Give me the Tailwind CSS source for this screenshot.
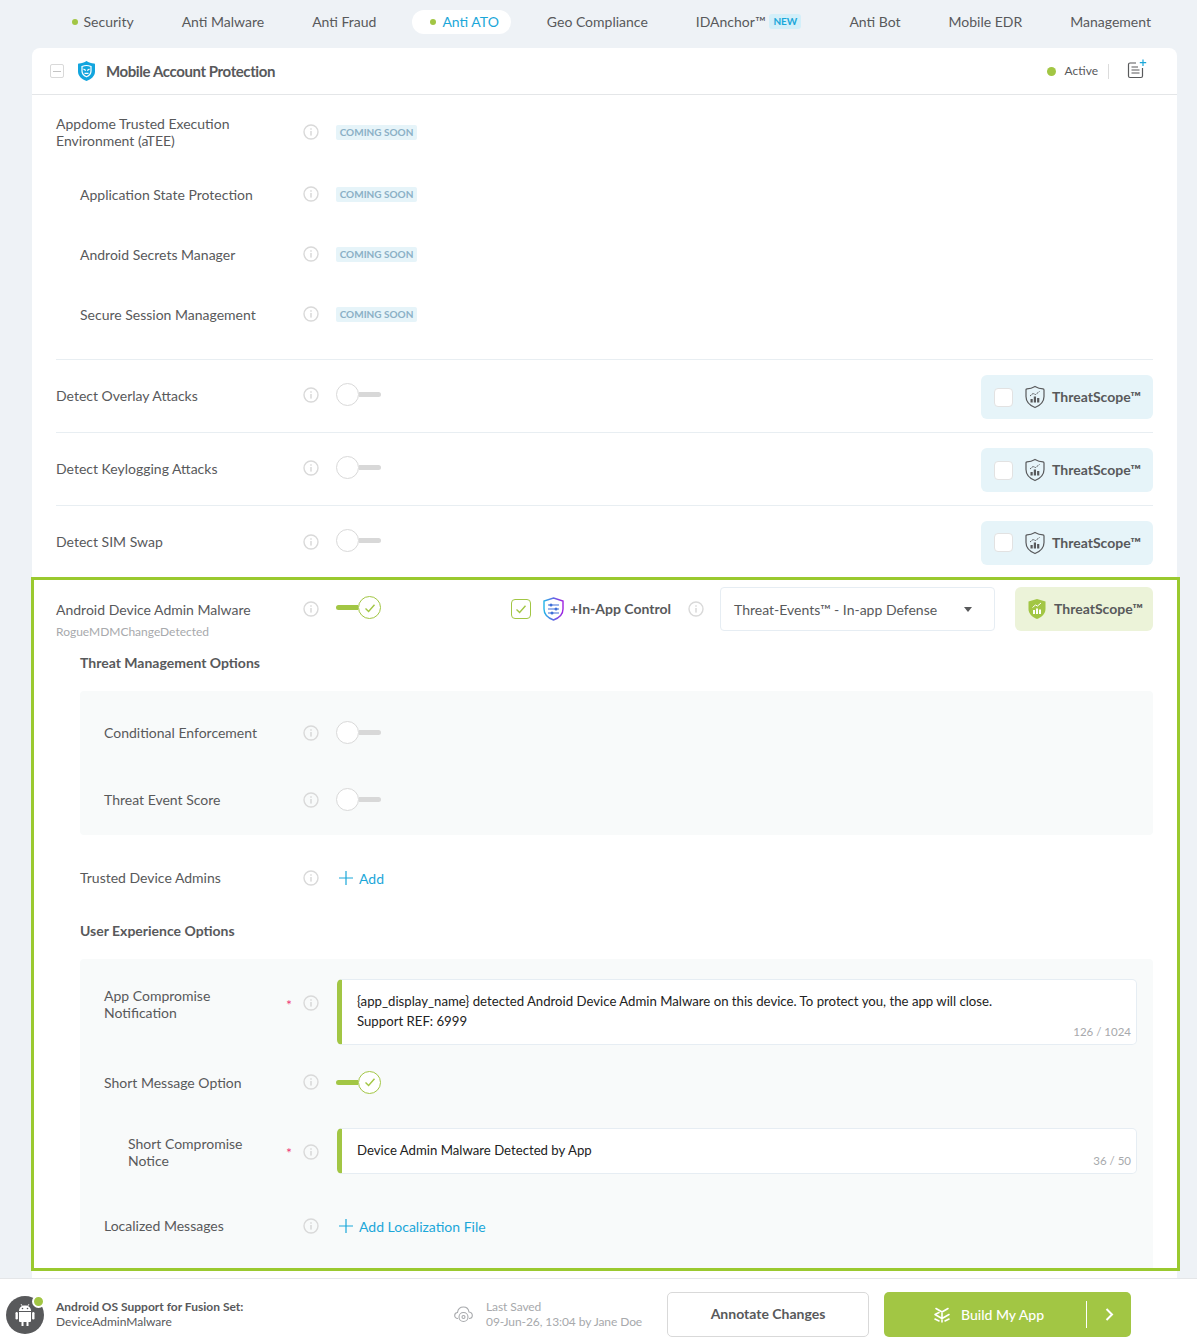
<!DOCTYPE html>
<html lang="en">
<head>
  <meta charset="UTF-8">
  <title>Mobile Account Protection</title>
  <script src="https://cdn.jsdelivr.net/npm/@tailwindcss/browser@4"></script>
</head>
<body class="bg-[#eef2f6] text-[#58595b] text-[14px] font-[family-name:Lato,sans-serif] h-[1344px] overflow-hidden">

  <!-- shared icons -->
  <svg class="hidden">
    <symbol id="info" viewBox="0 0 16 16">
      <circle cx="8" cy="8" r="7" fill="none" stroke="#d9d9d9" stroke-width="1.4"/>
      <rect x="7.4" y="7" width="1.2" height="4.6" fill="#d0d0d0"/>
      <circle cx="8" cy="5" r="0.8" fill="#d0d0d0"/>
    </symbol>
    <symbol id="check" viewBox="0 0 12 12">
      <path d="M1.5 6.5 L4.6 9.5 L10.5 2.8" fill="none" stroke="#a2c644" stroke-width="1.4"/>
    </symbol>
    <symbol id="ts" viewBox="0 0 20 24">
      <path d="M10 1.500 C12.500 3 15.500 3.800 18 3.800 C18.800 3.800 19 4.300 19 5 V11.500 C19 16.500 15 20.500 10 22.500 C5 20.500 1 16.500 1 11.500 V5 C1 4.300 1.200 3.800 2 3.800 C4.500 3.800 7.500 3 10 1.500 Z" fill="none" stroke="#58595b" stroke-width="1.200"/>
      <rect x="5.500" y="14" width="2.200" height="3.500" fill="#58595b"/>
      <rect x="8.800" y="11.500" width="2.200" height="6" fill="#58595b"/>
      <rect x="12.100" y="13" width="2.200" height="4.500" fill="#58595b"/>
      <path d="M5 11 L8 8.500 L10.500 9.500 L14.500 6.500" fill="none" stroke="#58595b" stroke-width="1" stroke-dasharray="2 0.700"/>
    </symbol>
    <symbol id="plus" viewBox="0 0 14 14">
      <path d="M7 0 V14 M0 7 H14" stroke="#1ba7d9" stroke-width="1.2"/>
    </symbol>
  </svg>

  <!-- Tabs -->
  <div class="h-[44px] pb-[1px] flex items-center pl-[53.5px] gap-6">
    <div class="flex items-center gap-[6px] pl-[18px] pr-3 h-6"><span class="size-[6px] rounded-full bg-[#a2c644]"></span>Security</div>
    <div class="px-3">Anti Malware</div>
    <div class="px-3">Anti Fraud</div>
    <div class="flex items-center gap-[6px] pl-[18px] pr-3 h-6 rounded-full bg-white text-[#1ba7d9]"><span class="size-[6px] rounded-full bg-[#a2c644]"></span>Anti ATO</div>
    <div class="px-3">Geo Compliance</div>
    <div class="pl-3 pr-3 flex items-center gap-1">IDAnchor™<span class="h-[15px] px-1 rounded-[3px] bg-[#d3eff9] text-[#1ba7d9] text-[10px] font-bold leading-[15px]">NEW</span></div>
    <div class="px-3">Anti Bot</div>
    <div class="px-3">Mobile EDR</div>
    <div class="px-3">Management</div>
  </div>

  <!-- Card -->
  <div class="mt-1 ml-8 w-[1145px] h-[1230px] bg-white rounded-t-[8px]">
    <div class="h-[47px] border-b border-[#e4e6e8] flex items-center pl-[18px] pr-[30px]">
      <span class="size-[14px] border border-[#d9d9d9] rounded-[2px] flex items-center justify-center"><span class="w-2 h-px bg-[#c4c4c4]"></span></span>
      <svg class="ml-[14px] w-[17px] h-5" viewBox="0 0 17 20">
        <path d="M8.500 0 C10.500 1.500 13.500 2.500 16 2.500 C16.700 2.500 17 3 17 3.500 V10.500 C17 15 13 18.500 8.500 20 C4 18.500 0 15 0 10.500 V3.500 C0 3 0.300 2.500 1 2.500 C3.500 2.500 6.500 1.500 8.500 0 Z" fill="#12a5de"/>
        <path d="M8.500 4.500 C10.500 4.500 13 5.500 13 5.500 V10 C13 12.800 10.800 14.800 8.500 15.800 C6.200 14.800 4 12.800 4 10 V5.500 C4 5.500 6.500 4.500 8.500 4.500 Z" fill="none" stroke="#fff" stroke-width="1.200"/>
        <path d="M5.500 8 L7.800 9.500 M11.500 8 L9.200 9.500 M6.500 12.300 H10.500" stroke="#fff" stroke-width="1.200" fill="none"/>
      </svg>
      <span class="ml-[11px] text-[15px] font-bold tracking-[-0.4px]">Mobile Account Protection</span>
      <span class="ml-auto size-[9px] rounded-full bg-[#a2c644]"></span>
      <span class="ml-[9px] text-[12px]">Active</span>
      <span class="ml-[10px] w-px h-[15px] bg-[#dcdcdc]"></span>
      <svg class="ml-[18px] -mt-[4px] w-5 h-5" viewBox="0 0 20 20">
        <path d="M9 4 H3 Q1.500 4 1.500 5.500 V17 Q1.500 18.500 3 18.500 H14 Q15.500 18.500 15.500 17 V9" fill="none" stroke="#58595b" stroke-width="1.200"/>
        <path d="M4.500 8 H11 M4.500 11 H12.500 M4.500 14 H12.500" stroke="#58595b" stroke-width="1.200"/>
        <path d="M16 0.500 V7 M12.800 3.700 H19.200" stroke="#1ba7d9" stroke-width="1.200"/>
      </svg>
    </div>

    <!-- Coming soon rows -->
    <div class="px-6 pt-[7px]">
      <div class="h-[60px] flex items-center">
        <div class="w-[247px] leading-[17px]">Appdome Trusted Execution<br>Environment (aTEE)</div>
        <svg class="size-4"><use href="#info"/></svg>
        <span class="ml-[17px] w-[81px] h-[15px] rounded-[2px] bg-[#e6f4f9] text-[#8bb0c6] text-[10px] font-bold leading-[15px] text-center">COMING SOON</span>
      </div>
      <div class="mt-[2px] h-[60px] flex items-center">
        <div class="w-[247px] pl-6">Application State Protection</div>
        <svg class="size-4"><use href="#info"/></svg>
        <span class="ml-[17px] w-[81px] h-[15px] rounded-[2px] bg-[#e6f4f9] text-[#8bb0c6] text-[10px] font-bold leading-[15px] text-center">COMING SOON</span>
      </div>
      <div class="h-[60px] flex items-center">
        <div class="w-[247px] pl-6">Android Secrets Manager</div>
        <svg class="size-4"><use href="#info"/></svg>
        <span class="ml-[17px] w-[81px] h-[15px] rounded-[2px] bg-[#e6f4f9] text-[#8bb0c6] text-[10px] font-bold leading-[15px] text-center">COMING SOON</span>
      </div>
      <div class="h-[60px] flex items-center">
        <div class="w-[247px] pl-6">Secure Session Management</div>
        <svg class="size-4"><use href="#info"/></svg>
        <span class="ml-[17px] w-[81px] h-[15px] rounded-[2px] bg-[#e6f4f9] text-[#8bb0c6] text-[10px] font-bold leading-[15px] text-center">COMING SOON</span>
      </div>
    </div>

    <!-- Detect rows -->
    <div class="mx-6 mt-[15px] h-[73px] border-t border-[#e8eef2] flex items-center">
      <div class="w-[247px] -mt-[2px]">Detect Overlay Attacks</div>
      <svg class="size-4 -mt-[2px]"><use href="#info"/></svg>
      <div class="ml-[17px] -mt-[3px] w-[45px] flex items-center"><span class="size-[23px] rounded-full border border-[#d9d9d9] bg-white"></span><span class="flex-1 h-[5px] rounded-r-full bg-[#d8d8d8]"></span></div>
      <div class="ml-auto mt-[2px] w-[172px] h-11 rounded-[6px] bg-[#e6f4f9] flex items-center pl-[13px]">
        <span class="size-[19px] rounded-[4px] border border-[#e2e2e2] bg-white"></span>
        <svg class="ml-3 w-5 h-6"><use href="#ts"/></svg>
        <span class="ml-[7px] -mt-[2px] font-bold">ThreatScope™</span>
      </div>
    </div>
    <div class="mx-6 h-[73px] border-t border-[#e8eef2] flex items-center">
      <div class="w-[247px] -mt-[2px]">Detect Keylogging Attacks</div>
      <svg class="size-4 -mt-[2px]"><use href="#info"/></svg>
      <div class="ml-[17px] -mt-[3px] w-[45px] flex items-center"><span class="size-[23px] rounded-full border border-[#d9d9d9] bg-white"></span><span class="flex-1 h-[5px] rounded-r-full bg-[#d8d8d8]"></span></div>
      <div class="ml-auto mt-[2px] w-[172px] h-11 rounded-[6px] bg-[#e6f4f9] flex items-center pl-[13px]">
        <span class="size-[19px] rounded-[4px] border border-[#e2e2e2] bg-white"></span>
        <svg class="ml-3 w-5 h-6"><use href="#ts"/></svg>
        <span class="ml-[7px] -mt-[2px] font-bold">ThreatScope™</span>
      </div>
    </div>
    <div class="mx-6 h-[72px] border-t border-[#e8eef2] flex items-center">
      <div class="w-[247px]">Detect SIM Swap</div>
      <svg class="size-4"><use href="#info"/></svg>
      <div class="ml-[17px] -mt-[2px] w-[45px] flex items-center"><span class="size-[23px] rounded-full border border-[#d9d9d9] bg-white"></span><span class="flex-1 h-[5px] rounded-r-full bg-[#d8d8d8]"></span></div>
      <div class="ml-auto mt-[2px] w-[172px] h-11 rounded-[6px] bg-[#e6f4f9] flex items-center pl-[13px]">
        <span class="size-[19px] rounded-[4px] border border-[#e2e2e2] bg-white"></span>
        <svg class="ml-3 w-5 h-6"><use href="#ts"/></svg>
        <span class="ml-[7px] font-bold">ThreatScope™</span>
      </div>
    </div>

    <!-- Selected protection -->
    <div class="-ml-px w-[1149px] h-[694px] border-[3px] border-[#9ac92f] pl-[22px] pr-[24px] pt-[7px] overflow-hidden">
      <div class="h-11 flex items-center">
        <div class="w-[247px]">Android Device Admin Malware</div>
        <svg class="size-4 -mt-[1px]"><use href="#info"/></svg>
        <div class="ml-[17px] -mt-[3px] w-[45px] flex items-center"><span class="flex-1 h-[5px] rounded-l-full bg-[#a2c644]"></span><span class="size-[23px] rounded-full border border-[#a2c644] bg-white flex items-center justify-center"><svg class="size-3"><use href="#check"/></svg></span></div>
        <span class="ml-[130px] -mt-[1px] size-5 rounded-[4px] border border-[#a2c644] flex items-center justify-center"><svg class="size-3"><use href="#check"/></svg></span>
        <svg class="ml-3 -mt-[1px] w-[21px] h-6" viewBox="0 0 21 24">
          <defs><linearGradient id="grad" x1="0" y1="0" x2="1" y2="0"><stop offset="0" stop-color="#22b5e8"/><stop offset="1" stop-color="#a020e0"/></linearGradient></defs>
          <path d="M10.500 1 L20 4 V12 C20 17 16 21 10.500 23 C5 21 1 17 1 12 V4 Z" fill="none" stroke="url(#grad)" stroke-width="1.400"/>
          <path d="M5 8 H16 M5 12 H16 M5 16 H16" stroke="#3f6fd8" stroke-width="1.200"/>
          <circle cx="8" cy="8" r="1.500" fill="#3f6fd8"/><circle cx="13" cy="12" r="1.500" fill="#3f6fd8"/><circle cx="9" cy="16" r="1.500" fill="#3f6fd8"/>
        </svg>
        <span class="ml-[6px] -mt-[1px] w-[102px] font-bold whitespace-nowrap">+In-App Control</span>
        <svg class="ml-4 -mt-[1px] size-4"><use href="#info"/></svg>
        <div class="ml-4 w-[275px] h-11 rounded-[4px] border border-[#e6edf3] flex items-center pl-[13px] pr-[22px] justify-between">Threat-Events™ - In-app Defense<span class="border-x-4 border-x-transparent border-t-[5px] border-t-[#58595b]"></span></div>
        <div class="ml-5 w-[138px] h-11 rounded-[6px] bg-[#ecf3d9] flex items-center pl-[13px]">
          <svg class="w-[18px] h-5" viewBox="0 0 18 20">
            <path d="M9 0 L17.500 2.500 V10 C17.500 14.500 14 18 9 20 C4 18 0.500 14.500 0.500 10 V2.500 Z" fill="#a2c644"/>
            <rect x="5" y="11" width="2" height="4" fill="#fff"/><rect x="8" y="9.500" width="2" height="5.500" fill="#fff"/><rect x="11" y="10.500" width="2" height="4.500" fill="#fff"/>
            <path d="M4.500 8.500 L7.500 6 L9.500 7 L13 4" fill="none" stroke="#fff"/>
          </svg>
          <span class="ml-2 -mt-[2px] font-bold whitespace-nowrap">ThreatScope™</span>
        </div>
      </div>
      <div class="-mt-[6px] h-[14px] leading-[14px] text-[12px] text-[#a7a9ac]">RogueMDMChangeDetected</div>

      <div class="mt-[14px] pl-6 h-5 leading-5 font-bold">Threat Management Options</div>

      <div class="mt-[18px] ml-6 h-[144px] rounded-[4px] bg-[#f8fafa] px-6 pt-[17px]">
        <div class="h-[50px] flex items-center">
          <div class="w-[199px] -mt-[2px]">Conditional Enforcement</div>
          <svg class="size-4"><use href="#info"/></svg>
          <div class="ml-[17px] -mt-[2px] w-[45px] flex items-center"><span class="size-[23px] rounded-full border border-[#d9d9d9] bg-white"></span><span class="flex-1 h-[5px] rounded-r-full bg-[#d8d8d8]"></span></div>
        </div>
        <div class="mt-[17px] h-[50px] flex items-center">
          <div class="w-[199px] -mt-[2px]">Threat Event Score</div>
          <svg class="size-4"><use href="#info"/></svg>
          <div class="ml-[17px] -mt-[2px] w-[45px] flex items-center"><span class="size-[23px] rounded-full border border-[#d9d9d9] bg-white"></span><span class="flex-1 h-[5px] rounded-r-full bg-[#d8d8d8]"></span></div>
        </div>
      </div>

      <div class="mt-[23px] pl-6 h-10 flex items-center">
        <div class="w-[223px] -mt-[2px]">Trusted Device Admins</div>
        <svg class="size-4"><use href="#info"/></svg>
        <svg class="ml-5 size-[14px]"><use href="#plus"/></svg>
        <span class="ml-[6px] text-[#1ba7d9]">Add</span>
      </div>

      <div class="mt-[23px] pl-6 h-5 leading-5 font-bold">User Experience Options</div>

      <div class="mt-[18px] ml-6 h-[330px] rounded-[4px] bg-[#f8fafa] pl-6 pr-4 pt-5">
        <div class="h-[66px] flex items-start">
          <div class="w-[199px] pt-2 flex items-start">
            <div class="flex-1 leading-[17px]">App Compromise<br>Notification</div>
            <span class="mr-[11px] mt-[9px] text-[#ee3a78] text-[14px] leading-[17px]">*</span>
          </div>
          <svg class="mt-4 size-4"><use href="#info"/></svg>
          <div class="relative ml-[18px] flex-1 h-[66px] rounded-[5px] border border-[#e6edf3] border-l-[5px] border-l-[#a2c644] bg-white pl-[15px] pt-[11px] text-[13.2px] leading-5 text-[#222]">
            {app_display_name} detected Android Device Admin Malware on this device. To protect you, the app will close.<br>Support REF: 6999
            <span class="absolute right-[5px] bottom-[5px] text-[11.5px] leading-[15px] text-[#a7a9ac]">126 / 1024</span>
          </div>
        </div>
        <div class="mt-[25px] h-6 flex items-center">
          <div class="w-[199px]">Short Message Option</div>
          <svg class="size-4"><use href="#info"/></svg>
          <div class="ml-[17px] w-[45px] flex items-center"><span class="flex-1 h-[5px] rounded-l-full bg-[#a2c644]"></span><span class="size-[23px] rounded-full border border-[#a2c644] bg-white flex items-center justify-center"><svg class="size-3"><use href="#check"/></svg></span></div>
        </div>
        <div class="mt-[34px] h-[46px] flex items-center">
          <div class="w-[199px] mt-[2px] pl-6 flex items-start">
            <div class="flex-1 leading-[17px]">Short Compromise<br>Notice</div>
            <span class="mr-[11px] mt-[9px] text-[#ee3a78] text-[14px] leading-[17px]">*</span>
          </div>
          <svg class="mt-[2px] size-4"><use href="#info"/></svg>
          <div class="relative ml-[18px] flex-1 h-[46px] rounded-[5px] border border-[#e6edf3] border-l-[5px] border-l-[#a2c644] bg-white pl-[15px] text-[13.2px] leading-[42px] text-[#222]">
            Device Admin Malware Detected by App
            <span class="absolute right-[5px] bottom-[5px] text-[11.5px] leading-[15px] text-[#a7a9ac]">36 / 50</span>
          </div>
        </div>
        <div class="mt-10 h-6 flex items-center">
          <div class="w-[199px] -mt-[2px]">Localized Messages</div>
          <svg class="size-4"><use href="#info"/></svg>
          <svg class="ml-5 size-[14px]"><use href="#plus"/></svg>
          <span class="ml-[6px] text-[#1ba7d9]">Add Localization File</span>
        </div>
      </div>
    </div>
  </div>

  <!-- Footer -->
  <div class="h-[66px] border-t border-[#e4e6e8] bg-white flex items-center pl-[6px] pt-[6px]">
    <div class="relative size-[38px] rounded-full bg-[#58595b] flex items-center justify-center">
      <svg class="w-[22px] h-6" viewBox="0 0 22 24" fill="#fff">
        <path d="M5 8 C5 4.500 7.500 2.500 11 2.500 C14.500 2.500 17 4.500 17 8 Z"/>
        <path d="M7 1 L8.500 3.500 M15 1 L13.500 3.500" stroke="#fff" stroke-width="0.800"/>
        <circle cx="8.500" cy="5.500" r="0.800" fill="#58595b"/><circle cx="13.500" cy="5.500" r="0.800" fill="#58595b"/>
        <path d="M5 9 H17 V18 Q17 19 16 19 H14.500 V23 H12.500 V19 H9.500 V23 H7.500 V19 H6 Q5 19 5 18 Z"/>
        <rect x="1.500" y="9" width="2.400" height="7.500" rx="1.200"/>
        <rect x="18.100" y="9" width="2.400" height="7.500" rx="1.200"/>
      </svg>
      <span class="absolute -top-[1px] -right-[1px] size-[13px] rounded-full bg-[#a2c644] border-2 border-white"></span>
    </div>
    <div class="ml-3 -mt-[2px] w-[390px] text-[12px] leading-[15px]">
      <div class="font-bold whitespace-nowrap">Android OS Support for Fusion Set:</div>
      <div>DeviceAdminMalware</div>
    </div>
    <svg class="ml-[8px] w-[19px] h-[17px]" viewBox="0 0 19 17" fill="none" stroke="#a7a9ac" stroke-width="1.100">
      <path d="M4 12.500 C1.500 12.500 0.700 10.800 0.700 9.500 C0.700 7.800 2 6.600 3.500 6.500 C4 3 6.500 1 9.500 1 C12.500 1 14.500 3 15 6 C17 6.300 18.300 7.700 18.300 9.500 C18.300 11 17.500 12.500 15 12.500"/>
      <circle cx="9.500" cy="11" r="4.500"/><circle cx="9.500" cy="11" r="1.500"/>
    </svg>
    <div class="ml-[13px] -mt-[2px] w-[181px] text-[12px] leading-[15px] text-[#a7a9ac] tracking-[-0.08px]">
      <div>Last Saved</div>
      <div>09-Jun-26, 13:04 by Jane Doe</div>
    </div>
    <button class="w-[202px] h-[45px] pb-[2px] rounded-[5px] border border-[#d9d9d9] bg-white font-bold">Annotate Changes</button>
    <button class="ml-[15px] w-[247px] h-[45px] rounded-[5px] bg-[#a2c644] text-white font-medium flex items-center pl-[49px]">
      <svg class="w-[18px] h-4" viewBox="0 0 18 16" fill="none" stroke="#fff" stroke-width="1.600" stroke-linecap="round">
        <path d="M3 1.500 L9 5 L15 1.500 M2 7.500 L9 11.500 L16 7.500 M9 5 V15 M2 7.500 L6 5.500 M16 12 L12 14 M2 12 L6 14"/>
      </svg>
      <span class="ml-[10px] w-[125px] text-left">Build My App</span>
      <span class="w-px h-[27px] bg-white"></span>
      <svg class="ml-[18px] w-[9px] h-[13px]" viewBox="0 0 9 13" fill="none" stroke="#fff" stroke-width="2"><path d="M1.500 1 L7 6.500 L1.500 12"/></svg>
    </button>
  </div>
</body>
</html>
